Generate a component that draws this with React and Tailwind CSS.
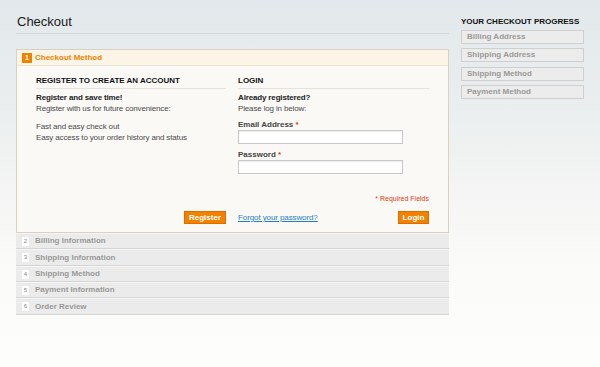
import React from "react";

const steps = [
  { n: "2", label: "Billing Information", h: "h-[16px]" },
  { n: "3", label: "Shipping Information", h: "h-[17px]" },
  { n: "4", label: "Shipping Method", h: "h-[16px]" },
  { n: "5", label: "Payment Information", h: "h-[16px]" },
  { n: "6", label: "Order Review", h: "h-[17px]" },
];

const progress = ["Billing Address", "Shipping Address", "Shipping Method", "Payment Method"];

export default function App() {
  return (
    <div className="w-[600px] h-[367px] overflow-hidden flex font-['Liberation_Sans',Arial,sans-serif] bg-[linear-gradient(180deg,#e2e8eb_0%,#e9edee_25%,#f3f4f3_50%,#fafaf8_70%,#fdfdfb_100%)] text-[#4a4a4a]">
      {/* main column */}
      <div className="ml-[16px] w-[433px] flex flex-col">
        <div className="mt-[14px] pb-[3px] border-b border-[#d3d7d9] leading-[16px] text-[13px] text-[#1a1a1a] pl-[1px]">
          Checkout
        </div>

        <div className="mt-[15px] border border-[#d8d1c4] bg-[#faf9f6]">
          <div className="h-[16px] bg-[#fcf4e6] border-b border-[#e9e2d5] flex items-center pl-[5px]">
            <span className="w-[10px] h-[10px] bg-[#f18200] text-white text-[7px] font-bold leading-[10px] text-center">
              1
            </span>
            <span className="ml-[3px] text-[8px] font-bold text-[#f18200] leading-[10px]">Checkout Method</span>
          </div>

          <div className="pl-[19px] pt-[10px] pb-[8px] flex gap-[12px]">
            {/* Register column */}
            <div className="w-[190px] h-[148px] flex flex-col">
              <div className="text-[8px] font-bold leading-[10px] text-[#111] pb-[2px] border-b border-[#e6e2da]">
                REGISTER TO CREATE AN ACCOUNT
              </div>
              <div className="mt-[3px] text-[8px] leading-[11px] tracking-[-0.15px]">
                <div className="font-bold text-[#222]">Register and save time!</div>
                <div>Register with us for future convenience:</div>
                <div className="mt-[7px]">Fast and easy check out</div>
                <div>Easy access to your order history and status</div>
              </div>
              <div className="mt-auto flex justify-end">
                <button className="w-[42px] h-[13px] bg-[#f18200] border border-[#e06c00] text-white text-[8px] font-bold leading-[11px]">
                  Register
                </button>
              </div>
            </div>

            {/* Login column */}
            <div className="w-[191px] h-[148px] flex flex-col">
              <div className="text-[8px] font-bold leading-[10px] text-[#111] pb-[2px] border-b border-[#e6e2da]">
                LOGIN
              </div>
              <div className="mt-[3px] text-[8px] leading-[11px] tracking-[-0.15px]">
                <div className="font-bold text-[#222]">Already registered?</div>
                <div>Please log in below:</div>
              </div>
              <div className="mt-[5px] text-[8px] leading-[11px] font-bold text-[#444]">
                Email Address <span className="text-[#eb340a]">*</span>
              </div>
              <div className="w-[165px] h-[14px] bg-white border border-[#c9c9c9] shadow-[inset_0_1px_1px_rgba(0,0,0,0.08)]" />
              <div className="mt-[5px] text-[8px] leading-[11px] font-bold text-[#444]">
                Password <span className="text-[#eb340a]">*</span>
              </div>
              <div className="w-[165px] h-[14px] bg-white border border-[#c9c9c9] shadow-[inset_0_1px_1px_rgba(0,0,0,0.08)]" />
              <div className="mt-auto text-right text-[7px] leading-[9px] text-[#eb340a]">* Required Fields</div>
              <div className="mt-[8px] flex items-center justify-between">
                <span className="text-[8px] leading-[11px] text-[#1e7ec8] underline tracking-[-0.1px]">Forgot your password?</span>
                <button className="w-[31px] h-[13px] bg-[#f18200] border border-[#e06c00] text-white text-[8px] font-bold leading-[11px]">
                  Login
                </button>
              </div>
            </div>
          </div>
        </div>

        <div className="flex flex-col">
          {steps.map((s) => (
            <div
              key={s.n}
              className={`${s.h} bg-[#ebebeb] border-b border-[#d5d5d5] border-t border-t-[#f5f5f5] flex items-center pl-[6px]`}
            >
              <span className="w-[7px] h-[9px] bg-white text-[#888] text-[6px] leading-[9px] text-center">{s.n}</span>
              <span className="ml-[6px] text-[8px] font-bold text-[#999] leading-[10px]">{s.label}</span>
            </div>
          ))}
        </div>
      </div>

      {/* sidebar */}
      <div className="ml-[12px] w-[123px] flex flex-col">
        <div className="mt-[17px] text-[8px] font-bold leading-[10px] text-[#111] whitespace-nowrap">
          YOUR CHECKOUT PROGRESS
        </div>
        <div className="mt-[3px] flex flex-col gap-[4.33px]">
          {progress.map((p) => (
            <div
              key={p}
              className="h-[14px] border border-[#cfcfcf] bg-[#ececec] pl-[5px] flex items-center text-[8px] font-bold text-[#999] leading-[10px]"
            >
              {p}
            </div>
          ))}
        </div>
      </div>
    </div>
  );
}
